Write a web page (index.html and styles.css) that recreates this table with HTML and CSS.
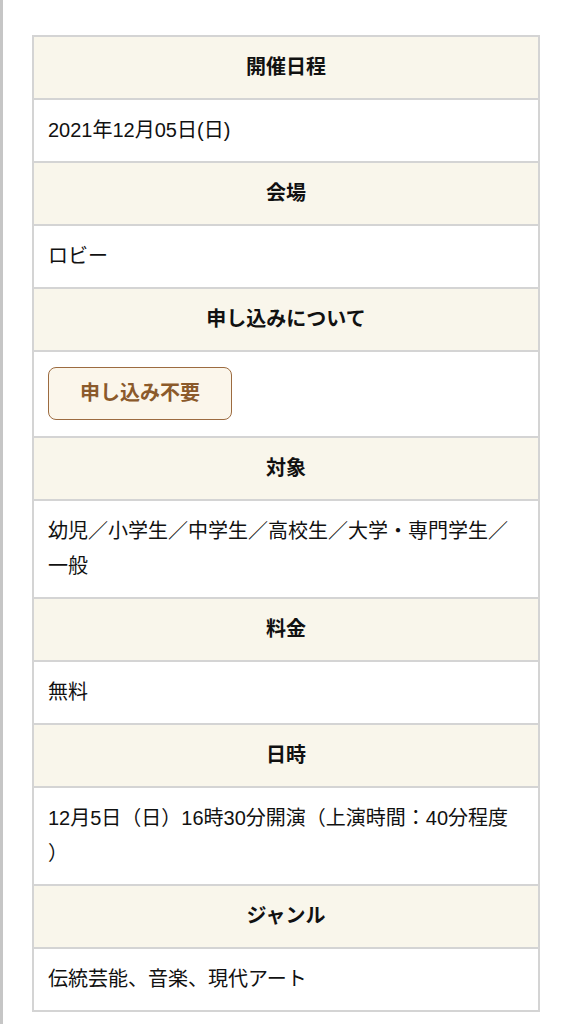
FILE: index.html
```html
<!DOCTYPE html>
<html lang="ja">
<head>
    <meta charset="UTF-8">
    <meta name="viewport" content="width=device-width, initial-scale=1.0">
    <title>イベント詳細</title>
    <link rel="stylesheet" href="styles.css">
</head>
<body>
    <div class="page">
        <table class="event-table">
            <tr><th>開催日程</th></tr>
            <tr><td>2021年12月05日(日)</td></tr>
            <tr><th>会場</th></tr>
            <tr><td>ロビー</td></tr>
            <tr><th>申し込みについて</th></tr>
            <tr><td class="btn-cell"><span class="apply-btn">申し込み不要</span></td></tr>
            <tr><th>対象</th></tr>
            <tr><td>幼児／小学生／中学生／高校生／大学・専門学生／一般</td></tr>
            <tr><th>料金</th></tr>
            <tr><td>無料</td></tr>
            <tr><th>日時</th></tr>
            <tr><td>12月5日（日）16時30分開演（上演時間：40分程度）</td></tr>
            <tr><th>ジャンル</th></tr>
            <tr><td>伝統芸能、音楽、現代アート</td></tr>
        </table>
    </div>
</body>
</html>
```

FILE: styles.css
```css
body {
    margin: 0;
    font-family: "Liberation Sans", "Noto Sans CJK JP", sans-serif;
    color: #111;
    background: #fff;
}
.page {
    border-left: 3px solid #c6c6c6;
    min-height: 1024px;
    padding: 35px 0 0 29px;
    box-sizing: border-box;
}
.event-table {
    width: 508px;
    border: 2px solid #d4d4d4;
    border-spacing: 0;
    border-collapse: separate;
    font-size: 20px;
    line-height: 35px;
    text-spacing-trim: space-all;
}
.event-table tr + tr th,
.event-table tr + tr td { border-top: 2px solid #d4d4d4; }
.event-table th {
    background: #f9f6eb;
    font-weight: bold;
    text-align: center;
    padding: 13px 14px;
}
.event-table td {
    text-align: left;
    padding: 13px 14px;
    word-break: break-all;
    line-break: anywhere;
}
.btn-cell { padding: 13px 14px; }
.apply-btn {
    display: block;
    width: fit-content;
    margin: 2px 0 3px;
    padding: 8px 31px;
    border: 1.5px solid #9c6b40;
    border-radius: 8px;
    background: #fbf6eb;
    color: #8b5a2b;
    font-weight: bold;
}
```
